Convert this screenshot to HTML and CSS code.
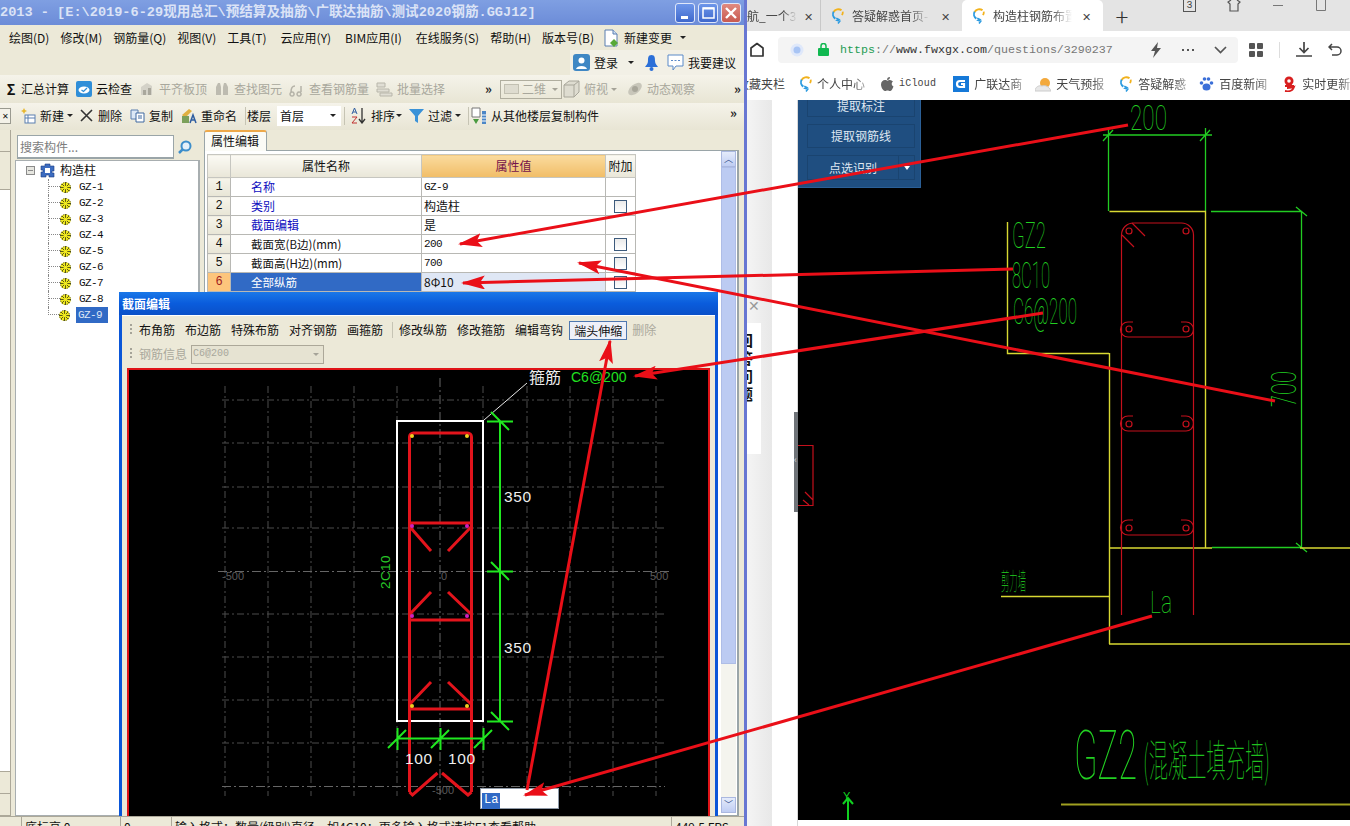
FILE: index.html
```html
<!DOCTYPE html>
<html lang="zh-CN">
<head>
<meta charset="utf-8">
<title>GGJ 2013</title>
<link rel="stylesheet" href="styles.css">
</head>
<body>
<svg class="defs" width="0" height="0">
  <defs>
    <symbol id="gear" viewBox="0 0 12 12"><circle cx="6" cy="6" r="5.800" fill="#f2ea20"/><path d="M6 0v12M0 6h12M2 2l8 8M10 2l-8 8" stroke="#3a3a10" stroke-width=".9"/><circle cx="6" cy="6" r="5.500" fill="none" stroke="#3a3a10" stroke-width=".8" stroke-dasharray="1.500 1.300"/><circle cx="6" cy="6" r="2" fill="#f4ee20"/></symbol>
    <symbol id="bulb" viewBox="0 0 16 20"><path d="M12 3.5A6 6 0 0 0 3 5.5" fill="none" stroke="#f2b21c" stroke-width="2.2"/><path d="M3 5a6 6 0 0 0 2 8" fill="none" stroke="#2d9be0" stroke-width="2.2"/><path d="M13.5 5a6 6 0 0 1-1 4" fill="none" stroke="#f2b21c" stroke-width="2"/><path d="M6 12.5l3 1.5-2 1 3 1-2 2.5" fill="none" stroke="#2d9be0" stroke-width="1.8"/></symbol>
    <symbol id="tb" viewBox="0 0 16 16"><path d="M2 14V6l6-4 5 3v9z" fill="#d4d2c8"/><path d="M4 14V9h3v5zM9 14V7h3v7z" fill="#a9a79c"/></symbol>
    <marker id="head" markerUnits="userSpaceOnUse" markerWidth="24" markerHeight="14" refX="22" refY="7" orient="auto"><path d="M0 0L24 7L0 14L5 7z" fill="#ea0f18"/></marker>
  </defs>
</svg>

<div class="desktop">
  <section class="app">
    <header class="titlebar">
      <span class="title-text">2013 - [E:\2019-6-29现用总汇\预结算及抽筋\广联达抽筋\测试2020钢筋.GGJ12]</span>
      <span class="win-btns">
        <span class="win-btn"><svg width="20" height="20" viewBox="0 0 20 20"><rect x="6" y="13" width="7" height="3" fill="#fff"/></svg></span>
        <span class="win-btn"><svg width="20" height="20" viewBox="0 0 20 20"><rect x="5" y="5" width="11" height="10" fill="none" stroke="#fff" stroke-width="1.5"/><path d="M5 5.5h11" stroke="#fff" stroke-width="2"/></svg></span>
        <span class="win-btn win-close"><svg width="20" height="20" viewBox="0 0 20 20"><path d="M5 5l10 10M15 5L5 15" stroke="#fff" stroke-width="2.4"/></svg></span>
      </span>
    </header>

    <nav class="menubar">
      <span>绘图(D)</span><span>修改(M)</span><span>钢筋量(Q)</span><span>视图(V)</span><span class="mw">工具(T)</span><span class="mw">云应用(Y)</span><span class="mw">BIM应用(I)</span><span>在线服务(S)</span><span>帮助(H)</span><span>版本号(B)</span>
      <span class="tool"><svg width="17" height="18" viewBox="0 0 17 18"><path d="M2 1h8l4 4v12H2z" fill="#fff" stroke="#5a7fb0"/><path d="M10 1v4h4" fill="#cfe0f4" stroke="#5a7fb0"/><path d="M11 10l4 4-4 4-4-4z" fill="#58a838"/></svg>新建变更</span>
      <span class="caret"></span>
    </nav>

    <div class="loginbar">
      <div class="login-group">
        <span class="tool"><svg width="17" height="17" viewBox="0 0 17 17"><rect width="17" height="17" rx="3" fill="#3f87c4"/><circle cx="8.5" cy="6.5" r="3" fill="#fff"/><path d="M3 15c1-4 10-4 11 0z" fill="#fff"/></svg>登录</span>
        <span class="caret"></span>
        <svg class="bell" width="15" height="17" viewBox="0 0 15 17"><path d="M7.5 1C4 1 4 4 4 7c0 3-2 4-3 6h13c-1-2-3-3-3-6 0-3 0-6-3.500-6z" fill="#2b6fd8"/><circle cx="7.500" cy="15" r="2" fill="#2b6fd8"/></svg>
        <span class="tool"><svg width="17" height="17" viewBox="0 0 17 17"><path d="M1 1h15v11H9l-3 4v-4H1z" fill="#fff" stroke="#5b8ac8"/><path d="M4 6.500h9" stroke="#5b8ac8" stroke-dasharray="2 1.500"/></svg>我要建议</span>
      </div>
    </div>

    <div class="toolbar tb1">
      <span class="tool"><b class="sigma">Σ</b>汇总计算</span>
      <span class="tool"><svg width="16" height="16" viewBox="0 0 16 16"><rect width="16" height="16" rx="2" fill="#2f8ed8"/><ellipse cx="8" cy="9" rx="5.500" ry="3.500" fill="#fff"/><path d="M5.500 9l2 1.500L11 7" fill="none" stroke="#2f8ed8" stroke-width="1.300"/></svg>云检查</span>
      <span class="tool off"><svg width="16" height="16"><use href="#tb"/></svg>平齐板顶</span>
      <span class="tool off"><svg width="16" height="16" viewBox="0 0 16 16"><path d="M2 14V6l2-4h2l1 4v8zM9 14V6l1-4h2l2 4v8z" fill="#bdbbb0"/></svg>查找图元</span>
      <span class="tool off"><svg width="16" height="16" viewBox="0 0 16 16"><path d="M2 11c0-4 2-6 4-6M3 11a2 2 0 1 0 .1 0M10 11a2 2 0 1 0 .1 0M12 11V5" fill="none" stroke="#b5b3a8" stroke-width="1.500"/></svg>查看钢筋量</span>
      <span class="tool off"><svg width="17" height="16" viewBox="0 0 17 16"><path d="M1 2h8v4H1zM1 8h12v3H1zM4 12h12v3H4z" fill="#e0ded4" stroke="#b8b6aa"/></svg>批量选择</span>
      <span class="chev chev-a">»</span>
      <span class="view-combo"><i class="view-swatch"></i>二维<i class="caret caret-off"></i></span>
      <span class="tool off"><svg width="17" height="18" viewBox="0 0 17 18"><path d="M1 5l5-4h10v11l-5 5H1z" fill="#dedcd0" stroke="#a8a69a"/><path d="M1 5h10v12M11 5l5-4" fill="none" stroke="#a8a69a"/></svg>俯视</span>
      <span class="caret caret-off"></span>
      <span class="tool off tool-orbit"><svg width="16" height="16" viewBox="0 0 16 16"><ellipse cx="8" cy="8" rx="8" ry="4.500" transform="rotate(-40 8 8)" fill="#c8c6ba"/><circle cx="8" cy="8" r="3" fill="#a8a69a"/></svg>动态观察</span>
      <span class="chev chev-b">»</span>
    </div>

    <div class="toolbar tb2">
      <span class="mini-close">✕</span>
      <span class="tool"><svg width="16" height="16" viewBox="0 0 16 16"><path d="M4 0l1 2 2 1-2 1-1 2-1-2-2-1 2-1z" fill="#e8b830"/><rect x="5" y="7" width="10" height="8" fill="#fff" stroke="#5b7fb0"/><path d="M5 10h10M8 7v8" stroke="#5b7fb0"/></svg>新建</span>
      <span class="caret"></span>
      <span class="tool"><svg width="13" height="13" viewBox="0 0 13 13"><path d="M1 1l11 11M12 1L1 12" stroke="#333" stroke-width="1.600"/></svg><span class="gap-x">删除</span></span>
      <span class="tool"><svg width="15" height="14" viewBox="0 0 15 14"><path d="M1 1h7v9H1z" fill="#dce8f6" stroke="#5b7fb0"/><path d="M6 4h8v9H6z" fill="#fff" stroke="#3e68a0"/><path d="M8 7h4M8 9h4" stroke="#3e68a0"/></svg>复制</span>
      <span class="tool"><svg width="16" height="16" viewBox="0 0 16 16"><path d="M1 7l7-6 3 2-7 7z" fill="#e0b040"/><path d="M1 8h7v7H1z" fill="#7ba05a"/><path d="M9 15l3-8 3 8M10 12h4" fill="none" stroke="#2e5da0" stroke-width="1.500"/></svg>重命名</span>
      <span class="sep"></span>
      <span class="floor-label">楼层</span>
      <span class="floor-combo">首层<i class="caret"></i></span>
      <span class="sep"></span>
      <span class="tool tool-tight"><svg width="16" height="17" viewBox="0 0 16 17"><path d="M11 1v14M8 12l3 4 3-4" fill="none" stroke="#333" stroke-width="1.300"/><path d="M1 7l2.500-6L6 7M2 5h3" fill="none" stroke="#2e5da0"/><path d="M1 10h5l-5 6h5" fill="none" stroke="#c03030"/></svg>排序</span>
      <span class="caret"></span>
      <span class="tool"><svg width="15" height="15" viewBox="0 0 15 15"><path d="M0 1h15L9 8v7l-3-2V8z" fill="#3a92d8"/></svg>过滤</span>
      <span class="caret"></span>
      <span class="sep"></span>
      <span class="tool"><svg width="16" height="18" viewBox="0 0 16 18"><path d="M1 1h8v9H1z" fill="#fff" stroke="#777"/><path d="M2 12h6l-3 5z" fill="#4a9a40"/><path d="M11 4h4v13h-4z" fill="#4b86c6"/><path d="M11 8h4M11 11h4M11 14h4" stroke="#fff"/></svg>从其他楼层复制构件</span>
      <span class="chev chev-c">»</span>
    </div>

    <div class="workspace">
      <aside class="sliver">
        <i class="sliver-btn"></i><i class="sliver-btn sliver-tall"></i>
        <div class="sliver-white"></div>
        <i class="sliver-btn"></i><i class="sliver-btn"></i>
      </aside>

      <aside class="tree-pane">
        <div class="search">
          <span class="search-box">搜索构件...</span>
          <svg class="search-icon" width="16" height="16" viewBox="0 0 16 16"><circle cx="9" cy="7" r="4.500" fill="#e4f0fa" stroke="#3d8ecb" stroke-width="2"/><path d="M5.500 10.500L2 14" stroke="#3d8ecb" stroke-width="2.500"/></svg>
        </div>
        <div class="tree">
          <div class="tree-root">
            <span class="expander"></span>
            <svg width="15" height="15" viewBox="0 0 15 15"><path d="M1 3h4V1h5v2h4v5h-2v2h2v4H9v-2H6v2H1V9h2V7H1z" fill="#3c6cc0" stroke="#1d3c80" stroke-width=".6"/><path d="M5 5h5v5H5z" fill="#fff"/></svg>
            <span>构造柱</span>
          </div>
          <ul class="tree-list">
            <li class="tree-item"><i class="branch"></i><svg width="11" height="11"><use href="#gear"/></svg><span class="tree-name">GZ-1</span></li>
            <li class="tree-item"><i class="branch"></i><svg width="11" height="11"><use href="#gear"/></svg><span class="tree-name">GZ-2</span></li>
            <li class="tree-item"><i class="branch"></i><svg width="11" height="11"><use href="#gear"/></svg><span class="tree-name">GZ-3</span></li>
            <li class="tree-item"><i class="branch"></i><svg width="11" height="11"><use href="#gear"/></svg><span class="tree-name">GZ-4</span></li>
            <li class="tree-item"><i class="branch"></i><svg width="11" height="11"><use href="#gear"/></svg><span class="tree-name">GZ-5</span></li>
            <li class="tree-item"><i class="branch"></i><svg width="11" height="11"><use href="#gear"/></svg><span class="tree-name">GZ-6</span></li>
            <li class="tree-item"><i class="branch"></i><svg width="11" height="11"><use href="#gear"/></svg><span class="tree-name">GZ-7</span></li>
            <li class="tree-item"><i class="branch"></i><svg width="11" height="11"><use href="#gear"/></svg><span class="tree-name">GZ-8</span></li>
            <li class="tree-item"><i class="branch"></i><svg width="11" height="11"><use href="#gear"/></svg><span class="tree-name tree-selected">GZ-9</span></li>
          </ul>
        </div>
      </aside>

      <main class="props">
        <div class="tab">属性编辑</div>
        <div class="props-body">
          <table class="grid">
            <colgroup><col class="c1"><col class="c2"><col class="c3"><col class="c4"></colgroup>
            <thead><tr><th></th><th>属性名称</th><th class="th-value">属性值</th><th>附加</th></tr></thead>
            <tbody>
              <tr><td class="idx">1</td><td class="name blue">名称</td><td class="val mono">GZ-9</td><td></td></tr>
              <tr><td class="idx">2</td><td class="name blue">类别</td><td class="val">构造柱</td><td class="chk"><i class="box"></i></td></tr>
              <tr><td class="idx">3</td><td class="name blue">截面编辑</td><td class="val">是</td><td></td></tr>
              <tr><td class="idx">4</td><td class="name">截面宽(B边)(mm)</td><td class="val mono">200</td><td class="chk"><i class="box"></i></td></tr>
              <tr><td class="idx">5</td><td class="name">截面高(H边)(mm)</td><td class="val mono">700</td><td class="chk"><i class="box"></i></td></tr>
              <tr class="sel"><td class="idx">6</td><td class="name">全部纵筋</td><td class="val">8Φ10</td><td class="chk"><i class="box"></i></td></tr>
            </tbody>
          </table>
          <div class="scrollbar">
            <span class="sb-btn">︿</span>
            <span class="sb-thumb"></span>
            <span class="sb-rest"></span>
            <span class="sb-btn sb-down">﹀</span>
          </div>
        </div>
      </main>
    </div>

    <footer class="statusbar">
      <span class="st st1"></span><span class="st st2">底标高 0</span><span class="st st3">0</span><span class="st st4">输入格式：数量(级别)直径，如4C10；更多输入格式请按F1查看帮助</span><span class="st st5">449.5 FPS</span>
    </footer>
  </section>

  <section class="browser">
    <div class="tabstrip">
      <div class="btab btab-first"><span class="btab-text">航_一个3</span><span class="btab-x">✕</span></div>
      <div class="btab"><svg width="14" height="18"><use href="#bulb"/></svg><span class="btab-text">答疑解惑首页-</span><span class="btab-x">✕</span></div>
      <div class="btab btab-active"><svg width="14" height="18"><use href="#bulb"/></svg><span class="btab-text">构造柱钢筋布置</span><span class="btab-x">✕</span></div>
      <span class="newtab">+</span>
      <div class="wctl">
        <span class="wctl-count">3</span>
        <svg width="14" height="12" viewBox="0 0 14 12"><path d="M4 0L1 2l2 2v7h8V4l2-2-3-2" fill="none" stroke="#555" stroke-width="1.200"/></svg>
        <svg width="12" height="12" viewBox="0 0 12 12"><path d="M1 5.500h10" stroke="#777"/></svg>
        <svg width="12" height="12" viewBox="0 0 12 12"><path d="M1.500 0v10.500h9V0" fill="none" stroke="#777"/></svg>
      </div>
    </div>

    <div class="addrbar">
      <svg class="home" width="16" height="16" viewBox="0 0 16 16"><path d="M2 6l6-4.500L14 6v8H2z" fill="none" stroke="#333" stroke-width="1.700" stroke-linejoin="round"/></svg>
      <div class="addr">
        <svg class="shield" width="14" height="14" viewBox="0 0 14 14"><circle cx="7" cy="7" r="6.500" fill="#dfe8fa"/><circle cx="7" cy="7" r="3.500" fill="#a8c4f4"/></svg>
        <svg class="lock" width="11" height="13" viewBox="0 0 11 13"><rect y="5" width="11" height="8" rx="1" fill="#10b850"/><path d="M3 5V3a2.500 2.500 0 0 1 5 0v2" fill="none" stroke="#10b850" stroke-width="1.500"/></svg>
        <span class="url"><b class="url-s">https</b><b class="url-g">://</b><b class="url-h">www.fwxgx.com</b><b class="url-g">/questions/3290237</b></span>
        <span class="addr-tools">
          <svg width="12" height="16" viewBox="0 0 12 16"><path d="M8 0L1 9h4l-2 7 8-10H7z" fill="#555"/></svg>
          <svg width="14" height="4" viewBox="0 0 14 4"><path d="M1 2h2M6 2h2M11 2h2" stroke="#555" stroke-width="2"/></svg>
          <svg width="13" height="8" viewBox="0 0 13 8"><path d="M1 1l5.500 5.500L12 1" fill="none" stroke="#555" stroke-width="1.700"/></svg>
        </span>
      </div>
      <div class="bar-tools">
        <svg width="14" height="14" viewBox="0 0 14 14"><path d="M0 1a1 1 0 0 1 1-1h4a1 1 0 0 1 1 1v4a1 1 0 0 1-1 1H1a1 1 0 0 1-1-1zM8 1a1 1 0 0 1 1-1h4a1 1 0 0 1 1 1v4a1 1 0 0 1-1 1H9a1 1 0 0 1-1-1zM0 9a1 1 0 0 1 1-1h4a1 1 0 0 1 1 1v4a1 1 0 0 1-1 1H1a1 1 0 0 1-1-1zM8 9a1 1 0 0 1 1-1h4a1 1 0 0 1 1 1v4a1 1 0 0 1-1 1H9a1 1 0 0 1-1-1z" fill="#555"/></svg>
        <i class="bar-sep"></i>
        <svg width="16" height="15" viewBox="0 0 16 15"><path d="M8 0v10M3.500 6L8 10.500 12.500 6M0 14h16" fill="none" stroke="#444" stroke-width="1.700"/></svg>
        <svg width="14" height="13" viewBox="0 0 14 13"><path d="M4 1L1 4l3 3M1 4h8a4 4 0 0 1 0 8H4" fill="none" stroke="#444" stroke-width="1.500"/></svg>
      </div>
    </div>

    <div class="bookmarks">
      <span class="bm bm-first">收藏夹栏</span>
      <span class="bm bm-a"><svg width="14" height="18"><use href="#bulb"/></svg><span class="bm-text">个人中心</span></span>
      <span class="bm bm-b"><svg width="13" height="14" viewBox="0 0 13 14"><path d="M9 3c1 0 2 .5 3 1.500-2 1.500-1.500 4 .5 5C11.500 12 10.500 14 9 14c-1 0-1.500-.5-2.500-.5S5 14 4 14C2 14 0 10 0 7.500 0 4.500 2 3 4 3c1 0 2 .7 2.500.7S8 3 9 3zM9 0c0 2-1 3-3 3 0-2 1-3 3-3z" fill="#666"/></svg><span class="mono-bm">iCloud</span></span>
      <span class="bm bm-c"><svg width="16" height="16" viewBox="0 0 16 16"><rect width="16" height="16" fill="#1679d8"/><path d="M12 5H7a3 3 0 0 0 0 6h4V8H8" fill="none" stroke="#fff" stroke-width="2.200"/></svg><span class="bm-text">广联达商</span></span>
      <span class="bm bm-d"><svg width="16" height="16" viewBox="0 0 16 16"><circle cx="10" cy="7" r="5" fill="#f3a93c"/><path d="M0 15c0-4 4-6 7-5 3-1 7 0 9 5z" fill="#e8e8e8" stroke="#ccc"/></svg><span class="bm-text">天气预报</span></span>
      <span class="bm bm-e"><svg width="14" height="18"><use href="#bulb"/></svg><span class="bm-text">答疑解惑</span></span>
      <span class="bm bm-f"><svg width="15" height="15" viewBox="0 0 15 15"><ellipse cx="7.500" cy="11" rx="4" ry="3.500" fill="#3b6fd8"/><circle cx="2.500" cy="7" r="1.800" fill="#3b6fd8"/><circle cx="12.500" cy="7" r="1.800" fill="#3b6fd8"/><circle cx="5.500" cy="3" r="1.800" fill="#3b6fd8"/><circle cx="9.500" cy="3" r="1.800" fill="#3b6fd8"/></svg><span class="bm-text">百度新闻</span></span>
      <span class="bm bm-g"><svg width="15" height="16" viewBox="0 0 15 16"><circle cx="7" cy="5" r="4.500" fill="#d81e1e"/><path d="M3 10h9M5 12c3 0 5 0 7-1-1 3-4 5-9 4" fill="none" stroke="#d81e1e" stroke-width="1.800"/><circle cx="7" cy="5" r="1.800" fill="#fff"/></svg><span class="bm-text">实时更新</span></span>
    </div>

    <div class="page">
      <div class="side">
        <span class="side-close">✕</span>
        <div class="side-card"><span class="side-card-text">回答问题</span></div>
        <span class="side-grip">‹</span>
      </div>
      <div class="drawing">
        <svg class="cad" width="552" height="720" viewBox="798 100 552 720">
          <g class="ln-green">
            <path d="M1108.500 128V211M1205.500 128V211M1103 135H1212M1103 141l10-11M1200 141l10-11"/>
            <path d="M1211 211.500H1301.500V547.500H1212M1296 207l11 9M1296 543l11 9"/>
          </g>
          <g class="ln-yellow">
            <path d="M1007.500 222V353.500H1109M1109.500 353V644M1109.500 211.500H1205.500V548M1109 548H1212M1300 548H1350M1109 644H1350M1001 596.500H1109"/>
          </g>
          <g class="ln-red">
            <path d="M1121.500 235a12 12 0 0 1 12-12h48a12 12 0 0 1 12 12V615M1121.500 235V615"/>
            <path d="M1132 223l13 13M1122 235l12 12"/>
            <path d="M1133 322h-5a7.500 7.500 0 0 0 0 15h58a7.500 7.500 0 0 0 0-15h-5M1133 416h-5a7.500 7.500 0 0 0 0 15h58a7.500 7.500 0 0 0 0-15h-5M1133 520h-5a7.500 7.500 0 0 0 0 15h58a7.500 7.500 0 0 0 0-15h-5"/>
            <circle cx="1129" cy="231" r="3"/><circle cx="1186" cy="231" r="3"/>
            <circle cx="1129" cy="329" r="3"/><circle cx="1186" cy="329" r="3"/>
            <circle cx="1129" cy="424" r="3"/><circle cx="1186" cy="424" r="3"/>
            <circle cx="1129" cy="528" r="3"/><circle cx="1186" cy="528" r="3"/>
            <path d="M798 445.500h15v60h-15M805 492l8 8M803 500l6 5"/>
          </g>
          <path class="ln-olive" d="M1061 804.500H1350"/>
          <text class="cad-t" x="1130" y="130" font-size="35" textLength="37" lengthAdjust="spacingAndGlyphs">200</text>
          <text class="cad-t" x="1012" y="248" font-size="36" textLength="34" lengthAdjust="spacingAndGlyphs">GZ2</text>
          <text class="cad-t" x="1012" y="288" font-size="36" textLength="38" lengthAdjust="spacingAndGlyphs">8C10</text>
          <text class="cad-t" x="1013" y="324" font-size="36" textLength="64" lengthAdjust="spacingAndGlyphs">C6@200</text>
          <text class="cad-t" x="1296" y="407" font-size="35" textLength="36" lengthAdjust="spacingAndGlyphs" transform="rotate(-90 1296 407)">700</text>
          <text class="cad-t" x="1150" y="613" font-size="32" textLength="22" lengthAdjust="spacingAndGlyphs">La</text>
          <text class="cad-c" x="1001" y="590" font-size="24" textLength="25" lengthAdjust="spacingAndGlyphs">剪力墙</text>
          <text class="cad-t" x="1074" y="779" font-size="69" textLength="63" lengthAdjust="spacingAndGlyphs">GZ2</text>
          <text class="cad-c cad-big" x="1143" y="777" font-size="44" textLength="127" lengthAdjust="spacingAndGlyphs">(混凝土填充墙)</text>
          <path class="ln-uaxis" d="M848 820V798M843 804l5-6 5 6"/>
          <text class="cad-y" x="843" y="800">Y</text>
        </svg>
        <div class="cad-panel">
          <span class="cad-btn cad-btn-top">提取标注</span>
          <span class="cad-btn">提取钢筋线</span>
          <span class="cad-btn cad-btn-split"><span class="split-main">点选识别</span><span class="split-arrow"></span></span>
        </div>
      </div>
    </div>
  </section>
</div>

<section class="dialog">
  <header class="dlg-title">截面编辑</header>
  <div class="dlg-client">
    <div class="dlg-tools">
      <i class="grip"></i>
      <span>布角筋</span><span>布边筋</span><span>特殊布筋</span><span>对齐钢筋</span><span>画箍筋</span>
      <i class="dlg-sep"></i>
      <span>修改纵筋</span><span>修改箍筋</span><span>编辑弯钩</span>
      <span class="dlg-active">端头伸缩</span>
      <span class="dlg-off">删除</span>
    </div>
    <div class="dlg-tools dlg-tools2">
      <i class="grip"></i>
      <span class="dlg-off">钢筋信息</span>
      <span class="dlg-combo">C6@200<i class="caret caret-off"></i></span>
    </div>
    <div class="sec-canvas">
      <svg width="579" height="446" viewBox="129 370 579 446">
        <path class="grid-line" d="M225 386V796M268 386V796M311 386V796M354 386V796M397 386V796M483 386V796M527 386V796M570 386V796M613 386V796M656 386V796M222 400H665M222 443H665M222 487H665M222 528H665M222 614H665M222 657H665M222 700H665M222 743H665"/>
        <path class="axis-line" d="M440 378V800M218 571.500H670M222 786.500H665"/>
        <text class="gtext" x="222" y="580">-500</text>
        <text class="gtext" x="650" y="580">500</text>
        <text class="gtext" x="441" y="580">0</text>
        <text class="gtext" x="432" y="794">-500</text>
        <rect class="conc" x="397" y="421" width="86" height="300"/>
        <path class="leader" d="M484 420L527 383"/>
        <g class="rebar">
          <path d="M409.500 792V437a4 4 0 0 1 4-4h54a4 4 0 0 1 4 4V792"/>
          <path d="M410 523H471M410 620H471M410 709H471M410 527l21 24M471 527l-23 24M431 592l-21 22M448 592l23 22M431 682l-21 22M448 682l23 22"/>
          <path d="M409.500 792l3 3 25-22M442 773l26 22 3.500-3"/>
        </g>
        <g class="dim">
          <path d="M500 421V721M487 421.500H513M487 571.500H513M487 721.500H513M491 412l18 18M491 562l18 18M491 712l18 18"/>
          <path d="M397 738.500H483M397.500 728V750M440.500 728V750M483.500 728V750M388 748l18-18M431 748l18-18M474 748l18-18"/>
        </g>
        <circle class="pt-y" cx="412" cy="436" r="2"/><circle class="pt-y" cx="467" cy="436" r="2"/>
        <circle class="pt-m" cx="412" cy="526" r="2"/><circle class="pt-m" cx="467" cy="526" r="2"/>
        <circle class="pt-m" cx="412" cy="616" r="2"/><circle class="pt-m" cx="467" cy="616" r="2"/>
        <circle class="pt-y" cx="412" cy="706" r="2"/><circle class="pt-y" cx="467" cy="706" r="2"/>
        <text class="num" x="504" y="502">350</text>
        <text class="num" x="504" y="653">350</text>
        <text class="num" x="405" y="764">100</text>
        <text class="num" x="448" y="764">100</text>
        <text class="lbl-g lbl-v" x="390" y="589" transform="rotate(-90 390 589)">2C10</text>
        <text class="lbl-w" x="529" y="383">箍筋</text>
        <text class="lbl-g" x="571" y="382">C6@200</text>
      </svg>
      <div class="la-input"><span class="la-sel">La</span></div>
    </div>
  </div>
</section>

<svg class="arrows" width="1350" height="826" viewBox="0 0 1350 826">
  <path d="M1128 125L460 244" marker-end="url(#head)"/>
  <path d="M1013 269L463 283" marker-end="url(#head)"/>
  <path d="M1275 401L579 263" marker-end="url(#head)"/>
  <path d="M1043 313L635 376" marker-end="url(#head)"/>
  <path d="M1152 616L525 795" marker-end="url(#head)"/>
  <path d="M527 790L610 341" marker-end="url(#head)"/>
</svg>
</body>
</html>
```

FILE: styles.css
```css
* { box-sizing: border-box; }
html, body { margin: 0; padding: 0; }
body {
  width: 1350px; height: 826px; overflow: hidden; position: relative;
  font-family: "Noto Sans CJK SC", "Liberation Sans", sans-serif;
  font-size: 12px; line-height: 16px; color: #111; background: #fff;
}
i { font-style: normal; display: block; }
.defs { position: absolute; }
.desktop { display: flex; height: 826px; }

/* application window */
.app { width: 747px; height: 826px; flex: none; display: flex; flex-direction: column; background: #ece9d8; border-right: 3px solid #6877d2; }
.titlebar { height: 25px; flex: none; display: flex; align-items: center; background: linear-gradient(#7f9fe2, #6c8cd8); overflow: hidden; }
.title-text { flex: 1; white-space: nowrap; font-family: "Liberation Mono", "Noto Sans CJK SC", monospace; font-size: 13.600px; font-weight: 700; color: #dbe3f6; }
.win-btns { display: flex; gap: 3px; padding-right: 3px; }
.win-btn { width: 20px; height: 20px; border-radius: 3px; background: linear-gradient(#6d96ea, #3f68cc); border: 1px solid #dfe7fa; display: flex; align-items: center; justify-content: center; }
.win-btn svg { margin: -1px; flex: none; }
.win-close { background: linear-gradient(#e08a80, #c85a50); }

.menubar { height: 25px; flex: none; display: flex; align-items: center; gap: 11px; padding-left: 9px; white-space: nowrap; }
.mw { margin-right: 3px; }
.tool { display: inline-flex; align-items: center; gap: 4px; white-space: nowrap; }
.off { color: #a8a79c; }
.caret { display: block; width: 0; height: 0; border: 3px solid transparent; border-top: 3px solid #222; border-bottom: 0; flex: none; margin: 0 2px; }
.caret-off { border-top-color: #a5a398; }
.menubar .tool { margin-left: -2px; }
.menubar .caret { margin-left: -3px; }

.loginbar { height: 25px; flex: none; display: flex; justify-content: flex-end; }
.login-group { display: flex; align-items: center; gap: 8px; padding: 0 8px 0 3px; background: #f2f0e6; }

.toolbar { flex: none; display: flex; align-items: center; white-space: nowrap; background: linear-gradient(#f5f3ea, #e8e5d4); }
.tb1 { height: 28px; padding-left: 5px; gap: 7px; }
.tb1 > .caret { margin: 0 1px 0 -4px; }
.tb2 { height: 27px; gap: 8px; padding-bottom: 2px; }
.tb2 > .caret { margin: 0 -1px 0 -5px; }
.sigma { width: 12px; text-align: center; font-size: 14px; }
.chev { font-weight: 700; font-size: 13px; color: #222; }
.chev-a { margin-left: 33px; }
.chev-b { margin-left: auto; margin-right: 3px; }
.chev-c { margin-left: auto; margin-right: 7px; margin-top: -6px; }
.view-combo { width: 62px; height: 19px; margin-left: 1px; margin-right: -6px; border: 1px solid #b0ae9f; display: flex; align-items: center; gap: 3px; padding-left: 3px; color: #a8a79c; }
.view-swatch { width: 15px; height: 10px; background: #dedcd0; border: 1px solid #c2c0b2; }
.view-combo .caret { margin-left: auto; margin-right: 3px; }
.tool-orbit { margin-left: 2px; }
.mini-close { width: 11px; height: 16px; margin-right: 1px; border: 1px solid #9a9a90; border-left: 0; font-size: 8px; line-height: 14px; text-align: center; background: #f3f1e8; }
.gap-x { margin-left: 1px; }
.sep { width: 1px; height: 18px; background: #c6c4b4; margin: 0 -6px 0 0; }
.floor-label { margin-right: -2px; margin-left: -1px; }
.floor-combo { width: 64px; height: 20px; background: #fff; display: flex; align-items: center; padding-left: 3px; margin-right: -5px; }
.floor-combo .caret { margin-left: auto; margin-right: 5px; }
.tool-tight { margin-left: 4px; margin-right: -2px; }

.workspace { flex: 1; min-height: 0; display: flex; }
.sliver { width: 11px; flex: none; display: flex; flex-direction: column; border-right: 1px solid #aca899; }
.sliver-btn { height: 22px; border-bottom: 1px solid #aca899; background: #ece9d8; }
.sliver-tall { height: 38px; }
.sliver-white { flex: 1; background: #fff; border-bottom: 1px solid #aca899; }

.tree-pane { width: 185px; margin: 0 4px; flex: none; display: flex; flex-direction: column; }
.search { height: 30px; flex: none; display: flex; align-items: flex-start; padding: 5px 0 0 2px; }
.search-box { width: 157px; height: 24px; background: #fff; border: 1px solid #9aa5a8; border-bottom-width: 2px; color: #7d7d7d; padding-left: 2px; line-height: 21px; }
.search-icon { margin: 4px 0 0 3px; }
.tree { flex: 1; background: #fff; border: 1px solid #a8aeb0; border-width: 1px 2px 1px 1px; padding: 1px 0 0 10px; }
.tree-root { height: 16px; display: flex; align-items: center; gap: 5px; }
.expander { width: 9px; height: 9px; border: 1px solid #8a8a8a; flex: none; background: linear-gradient(#8a8a8a, #8a8a8a) center / 5px 1px no-repeat, #e6e6e0; }
.tree-list { list-style: none; margin: 1px 0 0 22px; padding: 0; }
.tree-item { height: 16px; display: flex; align-items: center; border-left: 1px dotted #888; }
.tree-item:last-child { border-left: 0; margin-left: 1px; }
.branch { width: 11px; height: 8px; align-self: flex-start; border-bottom: 1px dotted #888; flex: none; }
.tree-item:last-child .branch { border-left: 1px dotted #888; margin-left: -1px; }
.tree-name { font-family: "Liberation Mono", monospace; font-size: 11px; letter-spacing: -.6px; height: 16px; line-height: 16px; padding: 0 6px 0 2px; margin-left: 6px; }
.tree-selected { background: #316ac5; color: #dfe7f6; }

.props { flex: 1; min-width: 0; padding-right: 5px; display: flex; flex-direction: column; }
.tab { width: 63px; height: 21px; flex: none; padding-left: 6px; background: #fbfbf6; border: 1px solid #9aa5a8; border-top: 2px solid #eea94a; border-bottom: 0; border-radius: 3px 3px 0 0; line-height: 18px; position: relative; z-index: 1; margin-bottom: -1px; }
.props-body { flex: 1; position: relative; display: flex; background: #fff; border: 1px solid #9aa5a8; border-width: 1px 2px 1px 1px; padding: 3px 3px 3px 2px; }
.grid { width: 428px; height: 137px; table-layout: fixed; border-collapse: collapse; align-self: flex-start; font-size: 12px; }
.c1 { width: 23px; } .c2 { width: 191px; } .c3 { width: 184px; } .c4 { width: 30px; }
.grid th { height: 23px; font-weight: 400; background: linear-gradient(#fbfaf4, #e9e6d8); border: 1px solid #c6c6c0; padding: 0; }
.grid .th-value { background: linear-gradient(#fadb9e, #f1bd67); color: #74124a; }
.grid td { height: 19px; border: 1px solid #b8b8b4; padding: 0; line-height: 16px; white-space: nowrap; overflow: hidden; }
.idx { text-align: center; background: linear-gradient(#f6f4ea, #e8e5d6); font-family: "Liberation Mono", monospace; }
.name { padding-left: 20px !important; font-size: 11.500px; }
.blue { color: #1010c0; font-size: 12px; }
.val { padding-left: 2px !important; }
.mono { font-family: "Liberation Mono", "Noto Sans CJK SC", monospace; font-size: 11px; letter-spacing: -.6px; }
.chk { text-align: center; }
.box { width: 13px; height: 13px; margin: 0 auto; border: 1px solid #3c5a7c; background: linear-gradient(#eaeaea, #fff); }
.sel .idx { background: #fdc57c; color: #a02020; }
.sel .name { background: #316ac5; color: #fff; }
.sel .val { background: #dfe7f5; }
.scrollbar { position: absolute; top: 0; right: 1px; bottom: 2px; width: 15px; display: flex; flex-direction: column; background: #f4f4ee; }
.sb-btn { height: 16px; flex: none; background: linear-gradient(#e4ebfb, #bfcdf3); border: 1px solid #aab8e0; color: #33508c; font-size: 9px; line-height: 14px; text-align: center; overflow: hidden; }
.sb-thumb { height: 497px; background: #bccbf2; border: 1px solid #aebde6; flex: none; }
.sb-rest { flex: 1; }

.statusbar { height: 10px; flex: none; display: flex; overflow: hidden; background: #ece9d8; border-top: 1px solid #aca899; }
.st { height: 30px; padding: 2px 0 0 3px; border-right: 1px solid #aca899; white-space: nowrap; flex: none; }
.st1 { width: 22px; } .st2 { width: 99px; } .st3 { width: 51px; } .st4 { width: 500px; } .st5 { flex: 1; border-right: 0; }

/* browser */
.browser { flex: 1; min-width: 0; display: flex; flex-direction: column; }
.tabstrip { height: 31px; flex: none; display: flex; align-items: center; background: #e4e4e4; overflow: hidden; }
.btab { width: 141px; height: 31px; flex: none; display: flex; align-items: center; gap: 7px; padding: 0 12px 0 10px; color: #444; }
.btab svg { flex: none; }
.btab-first { width: 74px; padding-left: 0; border-right: 1px solid #c8c8c8; }
.btab-first .btab-text { width: 50px; }
.btab-text { width: 79px; flex: none; overflow: hidden; white-space: nowrap; -webkit-mask-image: linear-gradient(to right, #000 72%, transparent); mask-image: linear-gradient(to right, #000 72%, transparent); }
.btab-x { margin-left: auto; font-size: 11px; color: #444; }
.btab-active { background: #fff; border-radius: 5px 5px 0 0; }
.newtab { margin-left: 10px; width: 18px; font-size: 24px; font-weight: 300; color: #333; line-height: 28px; text-align: center; }
.wctl { display: flex; gap: 31px; margin-left: 52px; align-items: flex-start; align-self: flex-start; }
.wctl-count { width: 13px; height: 12px; border: 1px solid #555; border-top: 0; font-family: "Liberation Mono", monospace; font-size: 10px; line-height: 11px; text-align: center; color: #444; }

.addrbar { height: 36px; flex: none; display: flex; align-items: center; background: #fff; padding: 1px 0 0 2px; }
.home { flex: none; }
.addr { width: 460px; height: 26px; margin-left: 13px; flex: none; display: flex; align-items: center; background: #f4f4f4; border-radius: 4px; padding-left: 12px; }
.lock { margin-left: 14px; flex: none; }
.url { margin-left: 11px; font-family: "Liberation Mono", monospace; font-size: 11.670px; white-space: nowrap; }
.url b { font-weight: 400; }
.url-s { color: #1f9d55; }
.url-g { color: #777; }
.url-h { color: #333; }
.addr-tools { margin-left: 37px; display: flex; align-items: center; gap: 19px; }
.bar-tools { display: flex; align-items: center; margin-left: 11px; gap: 16px; }
.bar-sep { width: 1px; height: 16px; background: #ddd; }

.bookmarks { height: 33px; flex: none; display: flex; align-items: center; background: #fff; white-space: nowrap; overflow: hidden; color: #444; }
.bm { display: flex; align-items: center; gap: 5px; flex: none; }
.bm-text { width: 50px; overflow: hidden; -webkit-mask-image: linear-gradient(to right, #000 70%, #0006); mask-image: linear-gradient(to right, #000 70%, #0006); }
.bm-first { width: 61px; margin-left: -10px; }
.bm-a { margin-left: 1px; gap: 4px; }
.mono-bm { font-family: "Liberation Mono", monospace; font-size: 10px; letter-spacing: .2px; padding-top: 1px; }
.bm-b { margin-left: 14px; }
.bm-c { margin-left: 17px; }
.bm-d { margin-left: 11px; }
.bm-e { margin-left: 13px; }
.bm-f { margin-left: 11px; }
.bm-g { margin-left: 13px; }

.page { flex: 1; min-height: 0; display: flex; background: #fff; }
.side { width: 51px; flex: none; position: relative; background: linear-gradient(to right, #f4f4f4 0, #e8e8e8 25px, #fff 25px); border-right: 1px solid #d8d8d8; }
.side-close { position: absolute; left: 1px; top: 197px; font-size: 14px; color: #999; }
.side-card { position: absolute; left: 0; top: 223px; width: 14px; height: 131px; background: #fff; overflow: hidden; }
.side-card-text { position: absolute; left: -9px; top: 8px; width: 15px; font-size: 15px; line-height: 18px; font-weight: 700; color: #111; word-break: break-all; }
.side-grip { position: absolute; right: -1px; top: 312px; width: 4px; height: 100px; background: #6f7378; color: #ddd; font-size: 9px; line-height: 96px; overflow: hidden; }
.drawing { flex: 1; min-width: 0; position: relative; }
.cad { display: block; background: #000; }
.cad path, .cad circle { fill: none; }
.ln-green path { stroke: #22cc22; stroke-width: 1.300; }
.ln-yellow path { stroke: #d8d832; stroke-width: 1.400; }
.ln-red path, .ln-red circle { stroke: #c4101c; stroke-width: 1.200; }
.cad .ln-olive { stroke: #a0a020; stroke-width: 2; }
.cad .ln-uaxis { stroke: #10d020; stroke-width: 2; }
.cad-t { font-family: Roboto, "Liberation Sans", sans-serif; font-weight: 100; fill: #22d022; }
.cad-c { font-family: "Noto Sans CJK SC", sans-serif; font-weight: 100; fill: #22d022; }
.cad-big { fill: #1fc01f; }
.cad-y { font-family: "Liberation Sans", sans-serif; font-size: 11px; fill: #10d020; }
.cad-panel { position: absolute; left: 0; top: 0; width: 123px; height: 88px; padding: 0 5px 0 9px; display: flex; flex-direction: column; gap: 7px; background: #1f4e80; border: 1px solid #2b5f96; border-top: 0; border-left: 0; color: #dfe8f2; }
.cad-btn { height: 24px; flex: none; border: 1px solid #1a4470; text-align: center; line-height: 22px; }
.cad-btn-top { height: 17px; line-height: 12px; border-top: 0; }
.cad-btn-split { height: 25px; display: flex; }
.split-main { flex: 1; line-height: 24px; }
.split-arrow { width: 16px; border-left: 1px solid #1a4470; position: relative; }
.split-arrow::after { content: ""; position: absolute; left: 5px; top: 10px; border: 3px solid transparent; border-top: 4px solid #fff; border-bottom: 0; }

/* dialog window */
.dialog { position: absolute; left: 119px; top: 292px; width: 599px; height: 524px; display: flex; flex-direction: column; background: #0a56d8; padding: 0 3px; }
.dlg-title { height: 23px; flex: none; margin: 0 -3px; padding-left: 3px; background: linear-gradient(#1a78e8, #0a5cdc 50%, #0a50c8); color: #fff; font-weight: 700; line-height: 24px; }
.dlg-client { flex: 1; min-height: 0; display: flex; flex-direction: column; background: #ece9d8; padding: 3px 5px 0; border-top: 1px solid #fff; }
.dlg-tools { height: 22px; flex: none; display: flex; align-items: center; gap: 10px; padding-left: 3px; white-space: nowrap; }
.dlg-tools2 { margin-top: 2px; gap: 4px; }
.grip { width: 2px; height: 12px; margin-right: -3px; background: repeating-linear-gradient(#a5a398 0 2px, transparent 2px 4px); }
.dlg-tools2 .grip { margin-right: 3px; }
.dlg-sep { width: 1px; height: 16px; margin: 0 -4px 0 -1px; background: #c6c4b4; }
.dlg-active { margin: 0 -5px 0 -4px; padding: 0 4px; height: 19px; line-height: 17px; background: #eef0f8; border: 1px solid #4e78b0; }
.dlg-off { color: #aaa89c; }
.dlg-combo { width: 133px; height: 19px; border: 1px solid #aca899; background: #e6e3d2; color: #a8a79c; display: flex; align-items: center; padding-left: 1px; font-family: "Liberation Mono", monospace; font-size: 10px; }
.dlg-combo .caret { margin-left: auto; margin-right: 4px; }
.sec-canvas { flex: 1; min-height: 0; margin-top: 3px; position: relative; background: #000; border: 2px solid #e01418; border-bottom: 0; }
.sec-canvas svg { display: block; }
.sec-canvas path, .sec-canvas rect { fill: none; }
.grid-line { stroke: #4c4c4c; stroke-width: 1; stroke-dasharray: 7 3 2 3; }
.axis-line { stroke: #666; stroke-width: 1; stroke-dasharray: 9 3 2 3; }
.gtext { font-family: "Liberation Sans", sans-serif; font-size: 11px; fill: #5a5a5a; }
.conc { stroke: #fff; stroke-width: 2; }
.leader { stroke: #e8e8e8; stroke-width: 1; }
.rebar path { stroke: #e3141c; stroke-width: 3; }
.dim path { stroke: #20e820; stroke-width: 2; }
.pt-y { fill: #f0d020; }
.pt-m { fill: #d020c0; }
.num { font-family: "Liberation Sans", sans-serif; font-size: 15.500px; letter-spacing: .6px; fill: #eee; }
.lbl-g { font-family: "Liberation Sans", sans-serif; font-size: 14px; fill: #20e020; }
.lbl-v { font-size: 13.500px; letter-spacing: .4px; fill: #28c828; }
.lbl-w { font-size: 16px; fill: #eee; }
.la-input { position: absolute; left: 351px; top: 418px; width: 79px; height: 21px; background: #fff; border: 1px solid #8f9aa8; padding: 1px 0 0 1px; }
.la-sel { display: inline-block; height: 16px; padding: 0 2px; background: #316ac5; color: #fff; line-height: 15px; font-family: "Liberation Mono", monospace; font-size: 12px; }

/* annotation arrows drawn over everything */
.arrows { position: absolute; left: 0; top: 0; pointer-events: none; }
.arrows path { fill: none; stroke: #ea0f18; stroke-width: 3; }
```
